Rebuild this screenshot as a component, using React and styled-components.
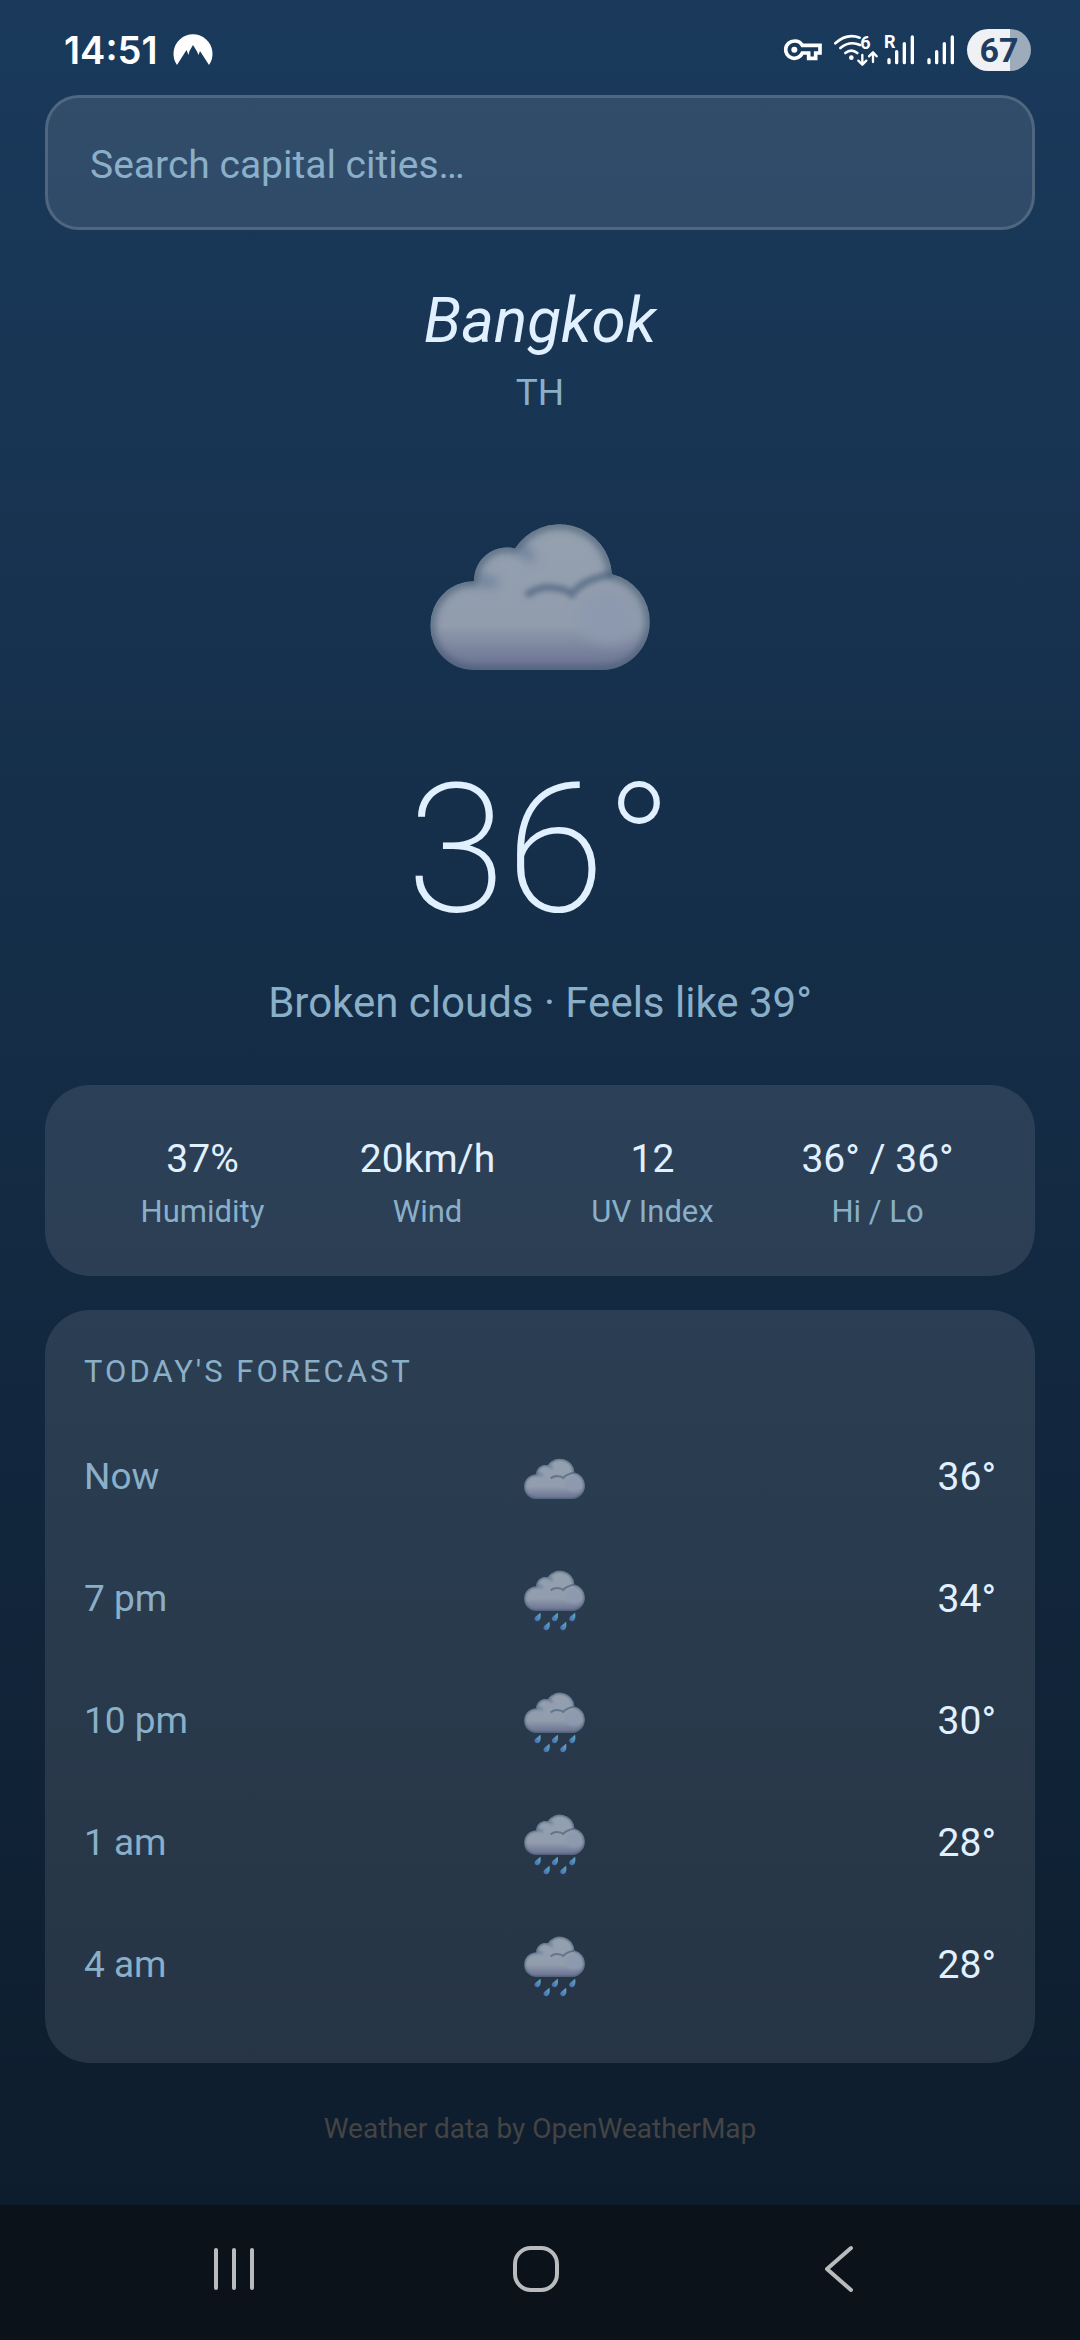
import React, { useId } from 'react';
import styled, { createGlobalStyle } from 'styled-components';

const hours = [
    { time: 'Now', icon: 'cloud', temp: 36 },
    { time: '7 pm', icon: 'rain', temp: 34 },
    { time: '10 pm', icon: 'rain', temp: 30 },
    { time: '1 am', icon: 'rain', temp: 28 },
    { time: '4 am', icon: 'rain', temp: 28 },
];

const stats = [
    { label: 'Humidity', value: '37%' },
    { label: 'Wind', value: '20km/h' },
    { label: 'UV Index', value: '12' },
    { label: 'Hi / Lo', value: '36° / 36°' },
];

const drops = [
    [235, 576],
    [423, 576],
    [612, 576],
    [333, 674],
    [514, 674],
];

const cloudPath =
    'M222 510 A132 133 0 0 1 90 377 A132 134 0 0 1 222 243 A98 98 0 0 1 345 145 A158 158 0 0 1 636 222 A146 146 0 0 1 750 366 A146 144 0 0 1 606 510 Z';

const WeatherIcon = ({ rain, width }) => {
    const id = useId().replace(/[^a-zA-Z0-9]/g, '');
    const viewHeight = rain ? 663 : 445;
    return (
        <svg width={width} height={Math.round((width * viewHeight) / 660)} viewBox={`90 65 660 ${viewHeight}`} aria-hidden='true'>
            <defs>
                <linearGradient id={`${id}base`} gradientUnits='userSpaceOnUse' x1='0' y1='65' x2='0' y2='510'>
                    <stop offset='0' stopColor='#95a1af' />
                    <stop offset='0.7' stopColor='#919cad' />
                    <stop offset='0.9' stopColor='#757e9a' />
                    <stop offset='1' stopColor='#6b7492' />
                </linearGradient>
                <linearGradient id={`${id}drop`} x1='1' y1='0' x2='0' y2='1'>
                    <stop offset='0' stopColor='#5fb0c8' />
                    <stop offset='1' stopColor='#4366b0' />
                </linearGradient>
                <filter id={`${id}soft`} x='-20%' y='-20%' width='140%' height='140%'>
                    <feGaussianBlur stdDeviation='17' />
                </filter>
                <filter id={`${id}crease`} x='-20%' y='-50%' width='140%' height='200%'>
                    <feGaussianBlur stdDeviation='8' />
                </filter>
                <filter id={`${id}edge`} x='-20%' y='-20%' width='140%' height='140%'>
                    <feGaussianBlur stdDeviation='13' />
                </filter>
                <clipPath id={`${id}shape`}>
                    <path d={cloudPath} />
                </clipPath>
            </defs>
            <g clipPath={`url(#${id}shape)`}>
                <rect x='90' y='65' width='660' height='445' fill={`url(#${id}base)`} />
                <g filter={`url(#${id}soft)`}>
                    <ellipse cx='625' cy='350' rx='90' ry='80' fill='#8d99ae' />
                    <path d='M350 140 Q380 150 395 180' fill='none' stroke='#627899' strokeWidth='24' />
                    <path d='M225 240 Q260 238 290 252' fill='none' stroke='#627899' strokeWidth='24' />
                </g>
                <path
                    d='M378 286 Q420 254 468 264 Q500 268 516 282 Q550 236 640 222'
                    fill='none'
                    stroke='#62768e'
                    strokeWidth='22'
                    filter={`url(#${id}crease)`}
                />
                <path d={cloudPath} fill='none' stroke='#3f5670' strokeWidth='18' filter={`url(#${id}edge)`} />
            </g>
            {rain &&
                drops.map(([x, y]) => (
                    <path
                        key={`${x}-${y}`}
                        d='M32 -47 C38 -10 36 20 20 36 C4 52 -26 46 -32 24 C-37 -2 4 -22 32 -47 Z'
                        transform={`translate(${x} ${y})`}
                        fill={`url(#${id}drop)`}
                    />
                ))}
        </svg>
    );
};

const MountainIcon = () => (
    <svg width='40' height='32' viewBox='0 0 40 32' aria-hidden='true'>
        <path
            d='M4 31 A19.5 19.5 0 1 1 36 31 L27 17 L25.500 21 L24 17.500 L20 11 L16.500 17 L15.500 21 L13.500 16 Z'
            fill='#fff'
        />
    </svg>
);

const KeyIcon = () => (
    <svg width='38' height='22' viewBox='66 89 114 66' aria-hidden='true'>
        <path
            d='M97 95 A26 26 0 1 0 121 131 H140 V147 H161 V131 H174 V108 H121 A26 26 0 0 0 97 95 Z'
            fill='none'
            stroke='#fff'
            strokeWidth='11'
        />
        <circle cx='97' cy='121' r='9' fill='#fff' />
    </svg>
);

const WifiIcon = () => (
    <svg width='44' height='34' viewBox='220 68 132 102' aria-hidden='true'>
        <g fill='none' stroke='#fff' strokeWidth='8' strokeLinecap='round' strokeLinejoin='round'>
            <path d='M224 99 Q258 68 297 82' />
            <path d='M239 113 Q268 90 298 104' />
            <path d='M254 128 Q272 114 290 128' />
            <path d='M305 134 V162 M293 151 L305 163 L317 151' strokeWidth='7' />
            <path d='M337 155 V127 M325 138 L337 126 L348 138' strokeWidth='7' />
        </g>
        <circle cx='272' cy='142' r='7' fill='#fff' />
        <StatusGlyph x='299' y='115'>
            6
        </StatusGlyph>
    </svg>
);

const SignalIcon = ({ roaming }) => (
    <svg width={roaming ? 31 : 28} height='34' viewBox={roaming ? '371 68 93 102' : '380 68 84 102'} aria-hidden='true'>
        <path d='M386 148 V157 M409 124 V157 M432 100 V157 M456 80 V157' stroke='#fff' strokeWidth='10' strokeLinecap='round' />
        {roaming && (
            <StatusGlyph x='371' y='112'>
                R
            </StatusGlyph>
        )}
    </svg>
);

const StatusBar = () => (
    <StatusBarStyle>
        <StatusLeft>
            <Clock>14:51</Clock>
            <MountainIcon />
        </StatusLeft>
        <StatusRight>
            <KeyIcon />
            <Network>
                <WifiIcon />
                <SignalIcon roaming />
            </Network>
            <SignalIcon />
            <Battery $level={67}>67</Battery>
        </StatusRight>
    </StatusBarStyle>
);

const NavBar = () => (
    <NavBarStyle>
        <NavButton type='button' aria-label='Recent apps'>
            <svg width='42' height='46' viewBox='0 0 42 46'>
                <path d='M3 4 V42 M21 4 V42 M39 4 V42' stroke='#b9bbbd' strokeWidth='4' strokeLinecap='round' />
            </svg>
        </NavButton>
        <NavButton type='button' aria-label='Home'>
            <svg width='46' height='46' viewBox='0 0 46 46'>
                <rect x='2' y='2' width='42' height='42' rx='16' fill='none' stroke='#b9bbbd' strokeWidth='4' />
            </svg>
        </NavButton>
        <NavButton type='button' aria-label='Back'>
            <svg width='30' height='46' viewBox='0 0 30 46'>
                <path d='M27 2 L3 23 L27 44' fill='none' stroke='#b9bbbd' strokeWidth='4' strokeLinecap='round' strokeLinejoin='round' />
            </svg>
        </NavButton>
    </NavBarStyle>
);

export default function App() {
    return (
        <Screen>
            <GlobalStyle />
            <StatusBar />
            <Content>
                <SearchInput type='text' placeholder='Search capital cities…' aria-label='Search capital cities' />
                <Current>
                    <City>Bangkok</City>
                    <Country>TH</Country>
                    <WeatherIcon width={220} />
                    <Temperature>36°</Temperature>
                    <Description>Broken clouds · Feels like 39°</Description>
                </Current>
                <StatsCard>
                    {stats.map((stat) => (
                        <Stat key={stat.label}>
                            <StatValue>{stat.value}</StatValue>
                            <StatLabel>{stat.label}</StatLabel>
                        </Stat>
                    ))}
                </StatsCard>
                <ForecastCard>
                    <ForecastTitle>Today's forecast</ForecastTitle>
                    <ForecastList>
                        {hours.map((hour) => (
                            <ForecastRow key={hour.time}>
                                <Time>{hour.time}</Time>
                                <WeatherIcon rain={hour.icon === 'rain'} width={61} />
                                <Temp>{hour.temp}°</Temp>
                            </ForecastRow>
                        ))}
                    </ForecastList>
                </ForecastCard>
                <Credit>Weather data by OpenWeatherMap</Credit>
            </Content>
            <NavBar />
        </Screen>
    );
}

const GlobalStyle = createGlobalStyle`
    * {
        box-sizing: border-box;
    }

    body {
        margin: 0;
        background: #0d1b2a;
        font-family: Roboto, 'Noto Sans', sans-serif;
    }

    svg {
        display: block;
        flex-shrink: 0;
        overflow: visible;
    }
`;

const Screen = styled.div`
    min-height: 100vh;
    display: flex;
    flex-direction: column;
    color: #e0f0ff;
    background: linear-gradient(#1a3a5c, #0d1b2a);
`;

const StatusBarStyle = styled.header`
    height: 95px;
    display: flex;
    justify-content: space-between;
    align-items: center;
    padding: 5px 49px 0 64px;
    color: #fff;
`;

const StatusLeft = styled.div`
    display: flex;
    align-items: center;
    gap: 16px;
`;

const StatusRight = styled.div`
    display: flex;
    align-items: center;
    gap: 12px;
`;

const Network = styled.div`
    display: flex;
    gap: 6px;
`;

const Clock = styled.span`
    font-family: Inter, Roboto, sans-serif;
    font-size: 38px;
    font-weight: 600;
`;

const StatusGlyph = styled.text`
    font-family: Roboto, sans-serif;
    font-size: 54px;
    font-weight: 700;
    fill: #fff;
`;

const Battery = styled.span`
    width: 64px;
    border-radius: 21px;
    line-height: 42px;
    text-align: center;
    font-size: 34px;
    font-weight: 700;
    color: #1f3d60;
    background: linear-gradient(to right, #eff1f4 ${(props) => props.$level}%, #9eabbb ${(props) => props.$level}%);
`;

const Content = styled.main`
    flex: 1;
    display: flex;
    flex-direction: column;
    padding: 0 45px;
`;

const SearchInput = styled.input`
    width: 100%;
    height: 135px;
    padding: 5px 42px 0;
    border: 3px solid rgba(255, 255, 255, 0.15);
    border-radius: 34px;
    outline: none;
    background: rgba(255, 255, 255, 0.1);
    font-family: inherit;
    font-size: 39px;
    color: #e0f0ff;

    &::placeholder {
        color: #8aafc8;
        opacity: 1;
    }
`;

const Current = styled.section`
    display: flex;
    flex-direction: column;
    align-items: center;
    padding: 53px 0 54px;
`;

const City = styled.h1`
    margin: 0 0 10px;
    font-size: 62px;
    font-style: italic;
    font-weight: 400;
    line-height: 76px;
`;

const Country = styled.p`
    margin: 0 0 105px;
    font-size: 37px;
    line-height: 48px;
    color: #8aafc8;
`;

const Temperature = styled.p`
    margin: 74px 0 19px;
    font-size: 180px;
    font-weight: 200;
    line-height: 212px;
`;

const Description = styled.p`
    margin: 0;
    font-size: 42px;
    line-height: 56px;
    color: #8aafc8;
`;

const Card = styled.section`
    border-radius: 45px;
    background: rgba(255, 255, 255, 0.1);
`;

const StatsCard = styled(Card)`
    display: grid;
    grid-template-columns: repeat(4, 1fr);
    margin-bottom: 34px;
    padding: 49px 45px 44px;
`;

const Stat = styled.div`
    display: flex;
    flex-direction: column;
    align-items: center;
    gap: 8px;
`;

const StatValue = styled.span`
    font-size: 39px;
    line-height: 50px;
`;

const StatLabel = styled.span`
    font-size: 31px;
    line-height: 40px;
    color: #8aafc8;
`;

const ForecastCard = styled(Card)`
    padding: 40px 39px 36px;
`;

const ForecastTitle = styled.h2`
    margin: 0 0 23px;
    font-size: 31px;
    font-weight: 400;
    line-height: 44px;
    letter-spacing: 3px;
    text-transform: uppercase;
    color: #8aafc8;
`;

const ForecastList = styled.ul`
    margin: 0;
    padding: 0;
    list-style: none;
`;

const ForecastRow = styled.li`
    height: 122px;
    display: flex;
    justify-content: space-between;
    align-items: center;
`;

const Time = styled.span`
    width: 170px;
    padding-bottom: 3px;
    font-size: 37px;
    color: #8aafc8;
`;

const Temp = styled.span`
    width: 142px;
    padding-bottom: 3px;
    font-size: 39px;
    text-align: right;
`;

const Credit = styled.p`
    margin: 46px 0 0;
    font-size: 28px;
    line-height: 40px;
    text-align: center;
    color: #444;
`;

const NavBarStyle = styled.nav`
    height: 135px;
    display: flex;
    align-items: center;
    padding: 0 90px 7px 83px;
    background: #0c1219;
`;

const NavButton = styled.button`
    flex: 1;
    height: 100%;
    display: flex;
    justify-content: center;
    align-items: center;
    padding: 0;
    border: none;
    background: none;
`;
